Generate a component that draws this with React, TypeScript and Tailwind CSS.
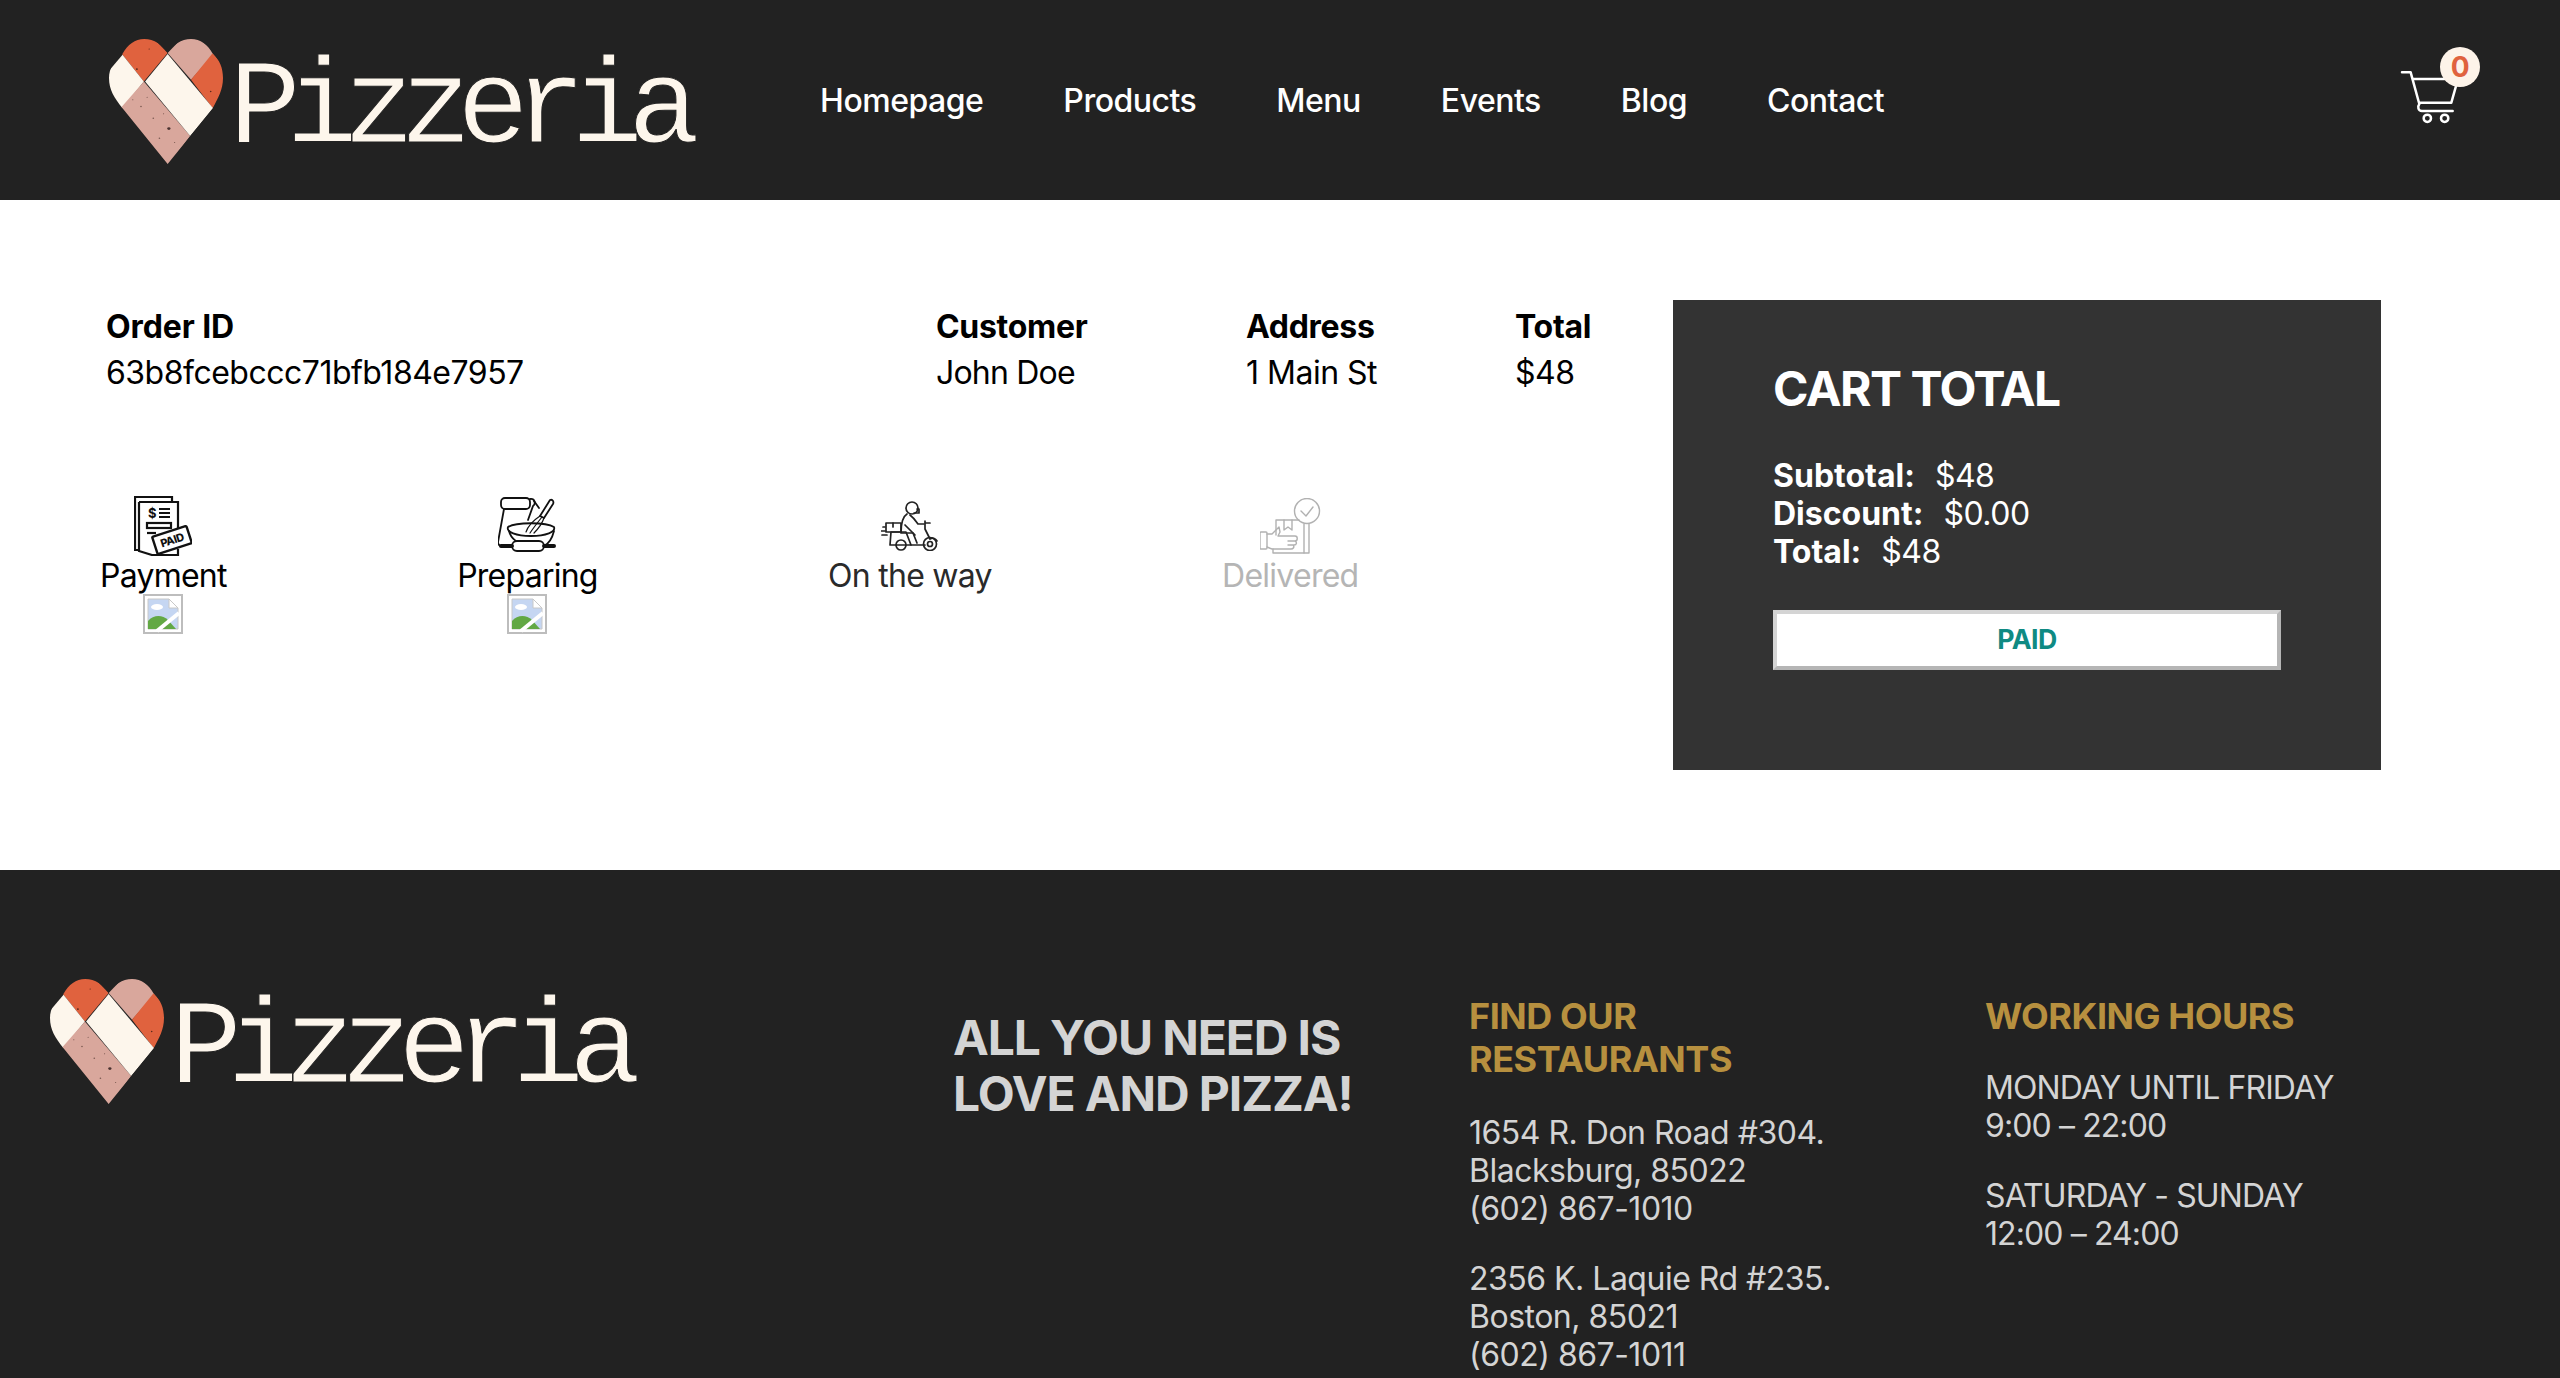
import type { ReactNode } from 'react';

const navLinks = ['Homepage', 'Products', 'Menu', 'Events', 'Blog', 'Contact'];

function HeartMark() {
  return (
    <svg width="114" height="125" viewBox="72 88 278 374" preserveAspectRatio="none" className="shrink-0">
      <defs>
        <clipPath id="heart-shape">
          <path d="M215 462 L105 295 C85 265 72 240 72 205 C72 175 85 150 105 132 C118 105 135 88 158 88 C182 88 203 105 215 130 C228 105 248 88 272 88 C295 88 313 105 325 132 C342 150 350 175 350 205 C350 240 338 265 325 295 Z" />
        </clipPath>
      </defs>
      <g clipPath="url(#heart-shape)">
        <polygon points="105,135 157,215 215,130 160,60 90,80" fill="#e0623e" />
        <polygon points="60,200 105,135 157,215 105,295 50,260" fill="#fdf6ec" />
        <polygon points="215,130 272,210 330,130 270,60" fill="#d9a79c" />
        <polygon points="325,130 272,210 325,295 380,210" fill="#e0623e" />
        <polygon points="157,215 270,378 215,470 100,295" fill="#d9a79c" />
        <polygon points="215,133 326,295 270,378 160,215" fill="#fdf6ec" />
        <circle cx="218" cy="356" r="4" fill="#4a3230" />
        <circle cx="140" cy="178" r="2.5" fill="#5c2a1c" />
        <circle cx="180" cy="325" r="2" fill="#7b5a52" />
        <circle cx="150" cy="290" r="2" fill="#7b5a52" />
        <circle cx="195" cy="385" r="2" fill="#7b5a52" />
        <circle cx="165" cy="262" r="1.5" fill="#7b5a52" />
        <circle cx="205" cy="312" r="1.5" fill="#7b5a52" />
        <circle cx="130" cy="270" r="1.5" fill="#7b5a52" />
        <circle cx="232" cy="398" r="1.5" fill="#7b5a52" />
        <circle cx="320" cy="245" r="2" fill="#5c2a1c" />
        <circle cx="170" cy="118" r="1.5" fill="#5c2a1c" />
      </g>
    </svg>
  );
}

function Logo() {
  return (
    <div className="flex items-start">
      <HeartMark />
      <span className="ml-[6px] mt-[3px] font-['Liberation_Mono',monospace] text-[120px] leading-[136px] tracking-[-15px] text-[#fdf6ec] [-webkit-text-stroke:1px_#222222]">
        Pizzeria
      </span>
    </div>
  );
}

function CartIcon() {
  return (
    <div className="relative mr-[100px] mt-[70px] self-start">
      <svg width="60" height="54" viewBox="118 120 180 162" fill="none" stroke="#fff" strokeWidth="7.5" strokeLinecap="round" strokeLinejoin="round">
        <path d="M124 127 H150 L176 222 C170 230 172 243 184 243 H276" />
        <path d="M158 147 H292 L272 218 H176" />
        <circle cx="200" cy="265" r="11" />
        <circle cx="252" cy="265" r="11" />
      </svg>
      <div className="absolute left-[40px] top-[-23px] flex h-[40px] w-[40px] items-center justify-center rounded-full bg-[#fdf3e9] text-[28px] font-bold text-[#e0623e]">
        0
      </div>
    </div>
  );
}

function PaymentIcon() {
  return (
    <svg width="58" height="60" viewBox="0 0 58 60" fill="none" stroke="#111" strokeWidth="2.2">
      <path d="M4 54 H1 V1 H38 V6" />
      <path d="M5 6 H44 V33 M5 6 V55 L18 59 H44 V53" />
      <path d="M25 17 H36 M25 21 H36 M25 13 H36" />
      <rect x="13" y="27" width="24" height="5" />
      <path d="M13 37 H22" />
      <text x="14" y="22" fontFamily="Inter, sans-serif" fontSize="13" fontWeight="700" fill="#111" stroke="none">$</text>
      <g transform="rotate(-18 38 44)">
        <rect x="20" y="35" width="36" height="18" rx="1" fill="#fff" strokeWidth="2.4" />
        <text x="38" y="48" textAnchor="middle" fontFamily="Inter, sans-serif" fontSize="11" fontWeight="800" fill="#111" stroke="none">PAID</text>
      </g>
    </svg>
  );
}

function PreparingIcon() {
  return (
    <svg width="58" height="60" viewBox="0 0 58 60" fill="none" stroke="#111" strokeWidth="1.8" strokeLinecap="round" strokeLinejoin="round">
      <rect x="3" y="2" width="29" height="11" rx="4" />
      <path d="M32 3 C37 2 38 8 35 10 L30 24" />
      <path d="M36 5 L41 12" />
      <path d="M6 13 L0 46 C0 49 2 50 4 50" />
      <path d="M52 4 C55 3 56 6 55 8 L46 22 L42 20 Z" />
      <path d="M42 20 C36 24 30 30 28 36 M46 22 C44 28 40 33 36 37 M44 21 C40 26 36 31 32 37" strokeWidth="1.2" />
      <path d="M10 31 C18 26 48 26 56 31 C58 36 48 40 33 40 C18 40 8 36 10 31 Z" />
      <path d="M11 35 C13 43 20 47 25 48 M56 35 C54 43 50 48 46 50" />
      <rect x="14" y="45" width="32" height="10" rx="5" fill="#fff" />
      <path d="M14 50 H3 M46 50 H56" strokeWidth="4" />
    </svg>
  );
}

function ScooterIcon() {
  return (
    <svg width="58" height="50" viewBox="0 0 58 50" fill="none" stroke="#222" strokeWidth="1.7" strokeLinecap="round" strokeLinejoin="round">
      <circle cx="31" cy="7" r="6" />
      <path d="M36 8 H38 V12 H33" />
      <path d="M26 13 C21 16 20 24 20 32 L32 32 L36 42 M29 14 C33 17 35 20 37 23 L43 23" />
      <path d="M24 24 L34 34" />
      <rect x="5" y="22" width="15" height="9" />
      <path d="M12 22 V26 M0 30 H4 M2 26 H4 M1 34 H6" />
      <path d="M10 31 H25 L30 44 H9 Z" />
      <path d="M44 20 V28 L49 38 M44 22 H49 M44 44 H30 M49 38 C52 36 55 38 56 40" />
      <circle cx="20" cy="44" r="5" />
      <circle cx="49" cy="43" r="6.5" />
      <circle cx="49" cy="43" r="2.5" />
    </svg>
  );
}

function DeliveredIcon() {
  return (
    <svg width="61" height="56" viewBox="0 0 61 56" fill="none" stroke="#000" strokeWidth="1.4" strokeLinecap="round" strokeLinejoin="round" className="opacity-30">
      <circle cx="47" cy="13" r="12.5" />
      <path d="M41 13 L46 18 L53 9" />
      <path d="M39 22 H16 V37 M49 26 V55 H13 V51" />
      <path d="M24 22 V32 L28 29 L32 32 V22 M44 26 V55" />
      <rect x="0" y="34" width="7" height="17" rx="1" />
      <path d="M7 36 H12 L19 29 L20 34 L18 38 H35 C38 38 38 43 35 43 H28 M35 43 C37 44 37 47 34 47 H28 M33 47 C35 49 33 51 31 51 H12 L7 49" />
    </svg>
  );
}

function BrokenImage() {
  return (
    <svg width="40" height="40" viewBox="0 0 40 40" className="shrink-0">
      <rect x="1" y="1" width="38" height="38" fill="#fff" stroke="#bdbdbd" strokeWidth="2" />
      <path d="M5 5 H26 L35 14 V35 H5 Z" fill="#c5d6f2" stroke="#c8c8c8" />
      <path d="M26 5 V14 H35 Z" fill="#fff" stroke="#c8c8c8" />
      <ellipse cx="14" cy="13" rx="6" ry="3" fill="#fff" />
      <path d="M5 35 V27 C10 21 19 20 25 26 L33 35 Z" fill="#62a844" />
      <path d="M14 37 L36 19" stroke="#fff" strokeWidth="4" />
    </svg>
  );
}

interface StepProps {
  icon: ReactNode;
  label: string;
  className?: string;
  broken?: boolean;
}

function Step({ icon, label, className, broken }: StepProps) {
  return (
    <div className={`flex flex-col items-center ${className ?? ''}`}>
      <div className="flex h-[60px] items-center justify-center">{icon}</div>
      <span className="h-[38px] pt-[1px] leading-[38px] tracking-[-0.75px]">{label}</span>
      {broken && <BrokenImage />}
    </div>
  );
}

function CartRow({ label, value }: { label: string; value: string }) {
  return (
    <div className="leading-[38px]">
      <b className="mr-[20px] font-bold tracking-normal">{label}</b>
      {value}
    </div>
  );
}

export default function App() {
  return (
    <div className="h-[1378px] overflow-hidden bg-white font-['Inter',sans-serif] text-[32px] tracking-[-0.5px] text-black">
      <header className="flex h-[200px] bg-[#222222] text-white">
        <div className="ml-[109px] mt-[39px]">
          <Logo />
        </div>
        <nav className="ml-[135px] flex items-center gap-[80px] pt-[2px] font-medium">
          {navLinks.map((link) => (
            <span key={link}>{link}</span>
          ))}
        </nav>
        <div className="ml-auto flex">
          <CartIcon />
        </div>
      </header>

      <main className="flex h-[670px] p-[100px]">
        <div className="w-[1573px] shrink-0">
          <table className="mb-[98px] mt-[2px] w-full border-separate border-spacing-[4px] text-left leading-[38px]">
            <tbody>
              <tr>
                <th className="w-[826px] p-[2px] font-bold tracking-[-0.1px]">Order ID</th>
                <th className="w-[306px] p-[2px] font-bold tracking-[-0.3px]">Customer</th>
                <th className="w-[265px] p-[2px] font-bold tracking-[-0.3px]">Address</th>
                <th className="p-[2px] font-bold tracking-[-0.3px]">Total</th>
              </tr>
              <tr>
                <td className="p-[2px]">63b8fcebccc71bfb184e7957</td>
                <td className="p-[2px] tracking-[-0.8px]">John Doe</td>
                <td className="p-[2px]">1 Main St</td>
                <td className="p-[2px]">$48</td>
              </tr>
            </tbody>
          </table>
          <div className="flex w-[80%] justify-between">
            <Step icon={<PaymentIcon />} label="Payment" broken />
            <Step icon={<PreparingIcon />} label="Preparing" broken />
            <Step icon={<ScooterIcon />} label="On the way" className="text-[#2a2a2a]" />
            <Step icon={<DeliveredIcon />} label="Delivered" className="text-[#b5b5b5]" />
          </div>
        </div>
        <div className="flex-1">
          <div className="h-[470px] w-[708px] bg-[#333333] pl-[100px] pt-[60px] text-white">
            <h2 className="mb-[39px] text-[48px] font-bold leading-[58px] tracking-[-1.5px]">CART TOTAL</h2>
            <CartRow label="Subtotal:" value="$48" />
            <CartRow label="Discount:" value="$0.00" />
            <CartRow label="Total:" value="$48" />
            <button className="mt-[39px] h-[60px] w-[508px] border-4 border-b-[#b5b5b5] border-l-[#d4d4d4] border-r-[#b5b5b5] border-t-[#d4d4d4] bg-white pb-[2px] text-[26.67px] font-bold text-[#0f8a83]">
              PAID
            </button>
          </div>
        </div>
      </main>

      <footer className="flex h-[508px] overflow-hidden bg-[#222222] text-[#d4d4d4]">
        <div className="w-[953px] shrink-0 pl-[50px] pt-[109px]">
          <Logo />
        </div>
        <div className="w-[516px] shrink-0 pt-[140px]">
          <h2 className="text-[48px] font-bold leading-[56px] tracking-[-1.1px]">
            ALL YOU NEED IS
            <br />
            LOVE AND PIZZA!
          </h2>
        </div>
        <div className="w-[516px] shrink-0 pt-[125px]">
          <h3 className="mb-[33px] text-[36px] font-bold leading-[43px] tracking-[-0.45px] text-[#b7903f]">
            FIND OUR
            <br />
            RESTAURANTS
          </h3>
          <p className="mb-[32px] leading-[38px]">
            1654 R. Don Road #304.
            <br />
            Blacksburg, 85022
            <br />
            (602) 867-1010
          </p>
          <p className="leading-[38px]">
            2356 K. Laquie Rd #235.
            <br />
            Boston, 85021
            <br />
            (602) 867-1011
          </p>
        </div>
        <div className="flex-1 pt-[125px]">
          <h3 className="mb-[31px] text-[36px] font-bold leading-[43px] tracking-[-0.45px] text-[#b7903f]">WORKING HOURS</h3>
          <p className="mb-[32px] leading-[38px] tracking-[-0.9px]">
            MONDAY UNTIL FRIDAY
            <br />
            9:00 – 22:00
          </p>
          <p className="leading-[38px] tracking-[-0.9px]">
            SATURDAY - SUNDAY
            <br />
            12:00 – 24:00
          </p>
        </div>
      </footer>
    </div>
  );
}
